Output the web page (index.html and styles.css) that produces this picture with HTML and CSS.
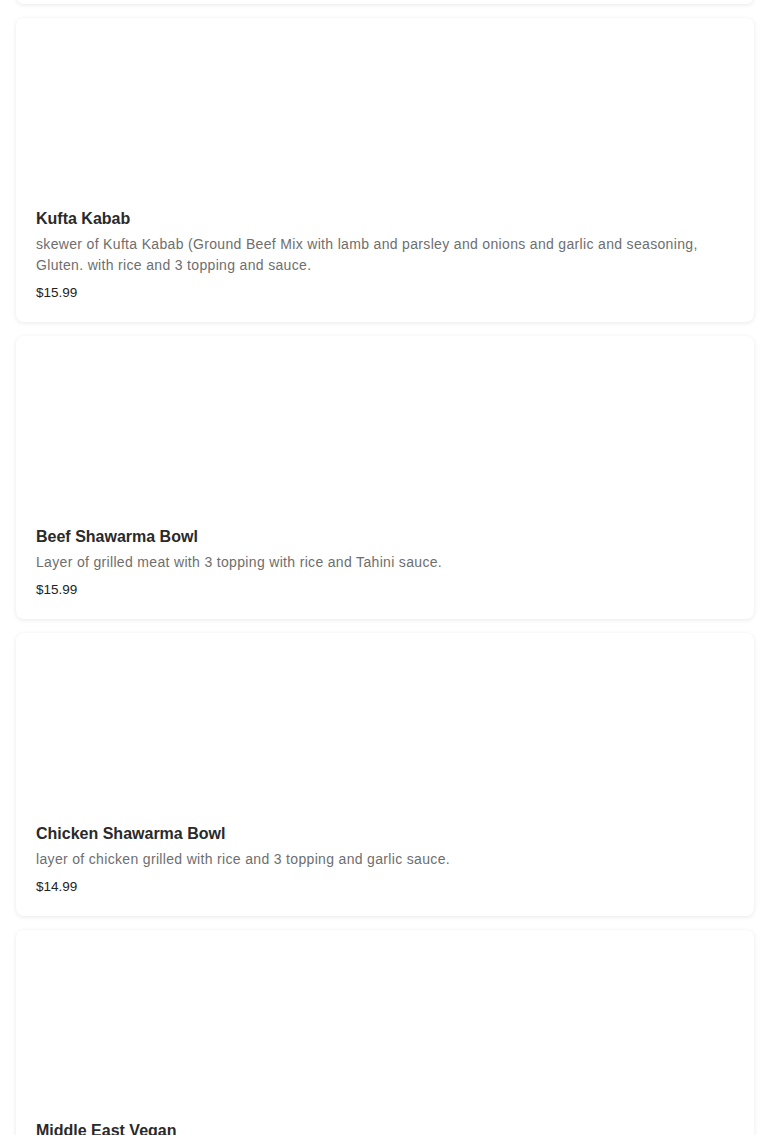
FILE: index.html
```html
<!DOCTYPE html>
<html>
<head>
<meta charset="utf-8">
<link rel="stylesheet" href="styles.css">
</head>
<body>
<div class="list">
  <div class="card card-prev">
    <div class="media"></div>
    <div class="body">
      <h3 class="title">&nbsp;</h3>
      <p class="desc">&nbsp;</p>
      <p class="price">&nbsp;</p>
    </div>
  </div>
  <div class="card">
    <div class="media"></div>
    <div class="body">
      <h3 class="title">Kufta Kabab</h3>
      <p class="desc">skewer of Kufta Kabab (Ground Beef Mix with lamb and parsley and onions and garlic and seasoning, Gluten. with rice and 3 topping and sauce.</p>
      <p class="price">$15.99</p>
    </div>
  </div>
  <div class="card">
    <div class="media"></div>
    <div class="body">
      <h3 class="title">Beef Shawarma Bowl</h3>
      <p class="desc">Layer of grilled meat with 3 topping with rice and Tahini sauce.</p>
      <p class="price">$15.99</p>
    </div>
  </div>
  <div class="card">
    <div class="media"></div>
    <div class="body">
      <h3 class="title">Chicken Shawarma Bowl</h3>
      <p class="desc">layer of chicken grilled with rice and 3 topping and garlic sauce.</p>
      <p class="price">$14.99</p>
    </div>
  </div>
  <div class="card">
    <div class="media"></div>
    <div class="body">
      <h3 class="title">Middle East Vegan</h3>
      <p class="desc">&nbsp;</p>
      <p class="price">&nbsp;</p>
    </div>
  </div>
</div>
</body>
</html>
```

FILE: styles.css
```css
html, body {
  margin: 0;
  padding: 0;
  background: #ffffff;
}
body {
  font-family: "Liberation Sans", Arial, sans-serif;
  overflow: hidden;
}
.list {
  display: flex;
  flex-direction: column;
  gap: 14px;
  padding: 0 16px;
}
.card {
  background: #ffffff;
  border-radius: 8px;
  box-shadow: 0 1px 5px rgba(0, 0, 0, 0.09);
}
.card-prev {
  margin-top: -279px;
}
.media {
  height: 169px;
}
.body {
  padding: 20px;
}
.title {
  margin: 0;
  font-size: 16px;
  line-height: 24px;
  font-weight: 600;
  color: #2a2a2a;
  letter-spacing: 0;
}
.desc {
  margin: 3px 0 0;
  font-size: 14px;
  line-height: 21px;
  color: #6e6e6e;
  letter-spacing: 0.33px;
}
.price {
  margin: 8px 0 0;
  font-size: 13.5px;
  line-height: 18px;
  color: #222222;
}
```
